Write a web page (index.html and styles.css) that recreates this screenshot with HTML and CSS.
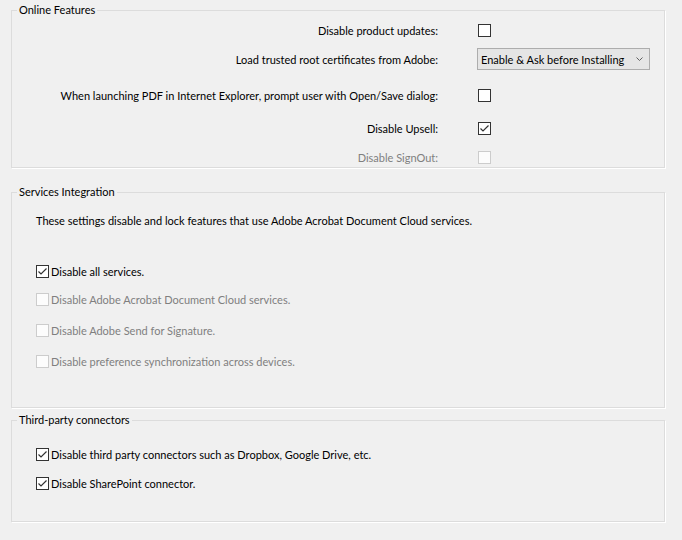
FILE: index.html
```html
<!DOCTYPE html>
<html>
<head>
<meta charset="utf-8">
<link rel="stylesheet" href="styles.css">
</head>
<body>
<div class="page">
  <div class="group g-online">
    <div class="legend">Online Features</div>
    <div class="opt r1">
      <div class="lbl">Disable product updates:</div>
      <span class="cb"></span>
    </div>
    <div class="opt r2">
      <div class="lbl">Load trusted root certificates from Adobe:</div>
      <div class="select"><span>Enable &amp; Ask before Installing</span><svg class="arrow" width="7" height="4" viewBox="0 0 7 4"><polyline points="0.5,0.5 3.5,3.5 6.5,0.5" fill="none" stroke="#606060" stroke-width="1"/></svg></div>
    </div>
    <div class="opt r3">
      <div class="lbl">When launching PDF in Internet Explorer, prompt user with Open/Save dialog:</div>
      <span class="cb"></span>
    </div>
    <div class="opt r4">
      <div class="lbl">Disable Upsell:</div>
      <span class="cb"><svg width="11" height="11" viewBox="0 0 11 11"><polyline points="1.5,5.5 4,8 9.5,2.5" fill="none" stroke="#333" stroke-width="1.2"/></svg></span>
    </div>
    <div class="opt r5 disabled">
      <div class="lbl">Disable SignOut:</div>
      <span class="cb"></span>
    </div>
  </div>

  <div class="group g-services">
    <div class="legend">Services Integration</div>
    <div class="intro">These settings disable and lock features that use Adobe Acrobat Document Cloud services.</div>
    <div class="ck s1">
      <span class="cb"><svg width="11" height="11" viewBox="0 0 11 11"><polyline points="1.5,5.5 4,8 9.5,2.5" fill="none" stroke="#333" stroke-width="1.2"/></svg></span>
      <span class="txt">Disable all services.</span>
    </div>
    <div class="ck s2 disabled">
      <span class="cb"></span>
      <span class="txt">Disable Adobe Acrobat Document Cloud services.</span>
    </div>
    <div class="ck s3 disabled">
      <span class="cb"></span>
      <span class="txt">Disable Adobe Send for Signature.</span>
    </div>
    <div class="ck s3 disabled">
      <span class="cb"></span>
      <span class="txt">Disable preference synchronization across devices.</span>
    </div>
  </div>

  <div class="group g-third">
    <div class="legend">Third-party connectors</div>
    <div class="ck t1">
      <span class="cb"><svg width="11" height="11" viewBox="0 0 11 11"><polyline points="1.5,5.5 4,8 9.5,2.5" fill="none" stroke="#333" stroke-width="1.2"/></svg></span>
      <span class="txt">Disable third party connectors such as Dropbox, Google Drive, etc.</span>
    </div>
    <div class="ck t2">
      <span class="cb"><svg width="11" height="11" viewBox="0 0 11 11"><polyline points="1.5,5.5 4,8 9.5,2.5" fill="none" stroke="#333" stroke-width="1.2"/></svg></span>
      <span class="txt">Disable SharePoint connector.</span>
    </div>
  </div>
</div>
</body>
</html>
```
FILE: styles.css
```css
html, body {
  margin: 0;
  padding: 0;
  background: #f0f0f0;
}
body {
  font-family: Lato, "Liberation Sans", sans-serif;
  font-size: 11px;
  color: #000;
  width: 682px;
  height: 540px;
  overflow: hidden;
}
.page {
  padding: 10px 17px 0 11px;
}
.group {
  border: 1px solid #dcdcdc;
  box-shadow: 1px 1px 0 #ffffff;
  box-sizing: border-box;
}
.g-online { height: 158px; }
.g-services { height: 216px; margin-top: 24px; }
.g-third { height: 102px; margin-top: 12px; }

.legend {
  width: fit-content;
  margin: -9px 0 0 5px;
  padding: 0 2px;
  background: #f0f0f0;
  line-height: 16px;
  height: 16px;
  white-space: nowrap;
}

.opt {
  display: flex;
  align-items: center;
  height: 20px;
}
.opt .lbl {
  width: 426px;
  text-align: right;
  white-space: nowrap;
  margin-right: 40px;
}
.r1 { margin-top: 2px; }
.r2 { margin-top: 9px; }
.r3 { margin-top: 16px; }
.r4 { margin-top: 13px; }
.r5 { margin-top: 9px; }

.cb {
  width: 13px;
  height: 13px;
  box-sizing: border-box;
  border: 1px solid #333333;
  background: #ffffff;
  display: inline-flex;
  align-items: center;
  justify-content: center;
  flex: none;
}
.cb svg { display: block; }
.disabled { color: #7f7f7f; }
.disabled .cb {
  border-color: #cccccc;
  background: #fcfcfc;
}

.select {
  margin-left: -1px;
  width: 173px;
  height: 22px;
  box-sizing: border-box;
  border: 1px solid #adadad;
  background: #e5e5e5;
  display: flex;
  align-items: center;
  justify-content: space-between;
  padding: 0 6px 0 3px;
  white-space: nowrap;
}
.select .arrow { display: block; }

.intro {
  margin: 13px 0 0 24px;
  line-height: 16px;
  height: 16px;
  white-space: nowrap;
}
.ck {
  display: flex;
  align-items: center;
  height: 20px;
  margin-left: 24px;
  white-space: nowrap;
}
.ck .txt { margin-left: 2px; }
.s1 { margin-top: 32px; }
.s2 { margin-top: 8px; }
.s3 { margin-top: 11px; }
.t1 { margin-top: 16px; }
.t2 { margin-top: 9px; }
```
